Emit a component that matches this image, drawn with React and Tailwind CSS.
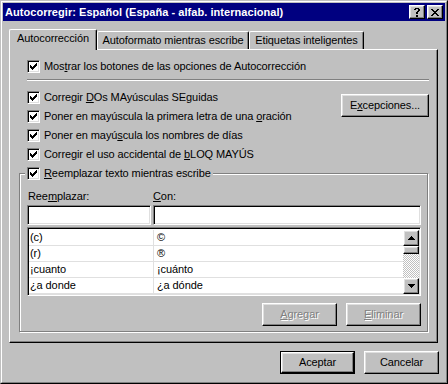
const checkRows = [
  "......x",
  ".....xx",
  "x...xxx",
  "xx.xxx.",
  "xxxxx..",
  ".xxx...",
  "..x....",
];

const helpRows = [
  ".xxxx.",
  "xx..xx",
  "....xx",
  "...xx.",
  "..xx..",
  "..xx..",
  "......",
  "..xx..",
  "..xx..",
];

const closeRows = [
  "xx....xx",
  ".xx..xx.",
  "..xxxx..",
  "...xx...",
  "..xxxx..",
  ".xx..xx.",
  "xx....xx",
];

const upRows = ["...x...", "..xxx..", ".xxxxx.", "xxxxxxx"];
const downRows = ["xxxxxxx", ".xxxxx.", "..xxx..", "...x..."];

function Pix({ rows }) {
  const w = rows[0].length;
  const h = rows.length;
  return (
    <svg width={w} height={h} viewBox={`0 0 ${w} ${h}`} shapeRendering="crispEdges" className="block">
      {rows.flatMap((r, y) =>
        [...r].map((c, x) => (c === "x" ? <rect key={`${x}-${y}`} x={x} y={y} width="1" height="1" fill="currentColor" /> : null))
      )}
    </svg>
  );
}

const raised =
  "bg-[#c0c0c0] border border-t-white border-l-white border-r-black border-b-black shadow-[inset_-1px_-1px_#808080,inset_1px_1px_#dfdfdf]";
const sunken =
  "bg-white border border-t-[#808080] border-l-[#808080] border-r-white border-b-white shadow-[inset_1px_1px_#000000,inset_-1px_-1px_#dfdfdf]";

function CheckBox() {
  return (
    <span className={`w-[13px] h-[13px] shrink-0 p-[2px] ${sunken}`}>
      <Pix rows={checkRows} />
    </span>
  );
}

function Check({ children }) {
  return (
    <div className="h-[19px] flex items-center gap-[4px]">
      <CheckBox />
      <span>{children}</span>
    </div>
  );
}

function Button({ children, disabled, className = "" }) {
  return (
    <div className={`h-[23px] flex items-center justify-center ${raised} ${className}`}>
      <span className={disabled ? "text-[#808080] [text-shadow:1px_1px_0_#ffffff]" : ""}>{children}</span>
    </div>
  );
}

const entries = [
  ["(c)", "©"],
  ["(r)", "®"],
  ["¡cuanto", "¡cuánto"],
  ["¿a donde", "¿a dónde"],
];

export default function App() {
  return (
    <div className="w-[448px] h-[384px] bg-[#c0c0c0] text-black text-[11px] leading-[13px] tracking-[-0.1px] font-['Liberation_Sans',Arial,sans-serif] border border-t-[#c0c0c0] border-l-[#c0c0c0] border-r-black border-b-black">
      <div className="h-full flex flex-col p-[1px] border border-t-white border-l-white border-r-[#808080] border-b-[#808080]">
        {/* title bar */}
        <div className="h-[18px] shrink-0 bg-[#000080] flex items-center pl-[2px] pr-[2px]">
          <span className="flex-1 text-white font-bold tracking-[0.05px]">Autocorregir: Español (España - alfab. internacional)</span>
          <div className={`w-[16px] h-[14px] flex items-center justify-center ${raised}`}>
            <Pix rows={helpRows} />
          </div>
          <div className={`ml-[2px] w-[16px] h-[14px] flex items-center justify-center ${raised}`}>
            <Pix rows={closeRows} />
          </div>
        </div>

        {/* tabs */}
        <div className="mt-[8px] h-[20px] shrink-0 pl-[6px] flex items-end">
          <div className="relative z-10 w-[88px] h-[21px] -mb-[1px] pt-[2px] text-center bg-[#c0c0c0] border-t border-l border-r border-t-white border-l-white border-r-black rounded-tl-[2px] rounded-tr-[2px] shadow-[inset_-1px_0_#808080]">
            Autocorrección
          </div>
          <div className="w-[152px] h-[18px] pt-[2px] text-center border-t border-l border-r border-t-white border-l-white border-r-black rounded-tl-[2px] rounded-tr-[2px] shadow-[inset_-1px_0_#808080]">
            Autoformato mientras escribe
          </div>
          <div className="w-[115px] h-[18px] pt-[2px] text-center border-t border-l border-r border-t-white border-l-white border-r-black rounded-tl-[2px] rounded-tr-[2px] shadow-[inset_-1px_0_#808080]">
            Etiquetas inteligentes
          </div>
        </div>

        {/* panel */}
        <div className="ml-[6px] w-[429px] h-[294px] shrink-0 border border-t-white border-l-white border-r-black border-b-black shadow-[inset_-1px_-1px_#808080]">
          <div className="pt-[7px] pl-[17px]">
            <Check>
              Mos<u>t</u>rar los botones de las opciones de Autocorrección
            </Check>
          </div>
          <div className="ml-[17px] mt-[3px] w-[402px] h-[2px] border-t border-b border-t-[#808080] border-b-white" />

          <div className="ml-[17px] mt-[7px] w-[402px] flex justify-between items-start">
            <div>
              <Check>
                Corregir <u>D</u>Os MAyúsculas SEguidas
              </Check>
              <Check>
                Poner en mayúscula la primera letra de una <u>o</u>ración
              </Check>
              <Check>
                Poner en mayú<u>s</u>cula los nombres de días
              </Check>
              <Check>
                Corregir el uso accidental de <u>b</u>LOQ MAYÚS
              </Check>
            </div>
            <Button className="mt-[6px] w-[88px] h-[22px]">
              E<u>x</u>cepciones...
            </Button>
          </div>

          {/* group box */}
          <div className="relative ml-[9px] mt-[9px] w-[409px] h-[159px] border border-[#808080] shadow-[inset_1px_1px_#ffffff,1px_1px_#ffffff]">
            <div className="absolute left-[5px] -top-[7px] h-[13px] flex items-center gap-[4px] pl-[2px] pr-[2px] bg-[#c0c0c0]">
              <CheckBox />
              <span>
                <u>R</u>eemplazar texto mientras escribe
              </span>
            </div>

            <div className="ml-[7px] mt-[16px] flex h-[13px]">
              <span className="w-[126px] pl-[1px]">
                Ree<u>m</u>plazar:
              </span>
              <span>
                <u>C</u>on:
              </span>
            </div>
            <div className="ml-[7px] mt-[2px] flex gap-[2px]">
              <div className={`w-[124px] h-[20px] ${sunken}`} />
              <div className={`w-[268px] h-[20px] ${sunken}`} />
            </div>

            <div className={`ml-[7px] mt-[2px] w-[394px] h-[69px] flex p-[1px] ${sunken}`}>
              <div className="flex-1 pt-[1px]">
                {entries.map(([a, b]) => (
                  <div key={a} className="h-[16px] flex border-b border-[#e0e0e0]">
                    <span className="w-[125px] pl-[1px] pt-[1px] border-r border-[#e0e0e0]">{a}</span>
                    <span className="pl-[3px] pt-[1px]">{b}</span>
                  </div>
                ))}
              </div>
              <div className="w-[16px] mt-[1px] flex flex-col">
                <div className={`h-[16px] flex items-center justify-center ${raised}`}>
                  <Pix rows={upRows} />
                </div>
                <div className={`h-[8px] ${raised}`} />
                <div className="h-[24px] bg-[repeating-conic-gradient(#c0c0c0_0_25%,#ffffff_0_50%)] bg-[length:2px_2px]" />
                <div className={`h-[16px] flex items-center justify-center ${raised}`}>
                  <Pix rows={downRows} />
                </div>
              </div>
            </div>

            <div className="mt-[7px] pr-[6px] flex justify-end gap-[9px]">
              <Button disabled className="w-[75px]">
                <u>A</u>gregar
              </Button>
              <Button disabled className="w-[75px]">
                <u>E</u>liminar
              </Button>
            </div>
          </div>
        </div>

        {/* dialog buttons */}
        <div className="mt-[8px] pr-[6px] flex justify-end gap-[9px]">
          <div className="w-[75px] h-[23px] border border-black flex">
            <Button className="flex-1 h-full">Aceptar</Button>
          </div>
          <Button className="w-[75px]">Cancelar</Button>
        </div>
      </div>
    </div>
  );
}
